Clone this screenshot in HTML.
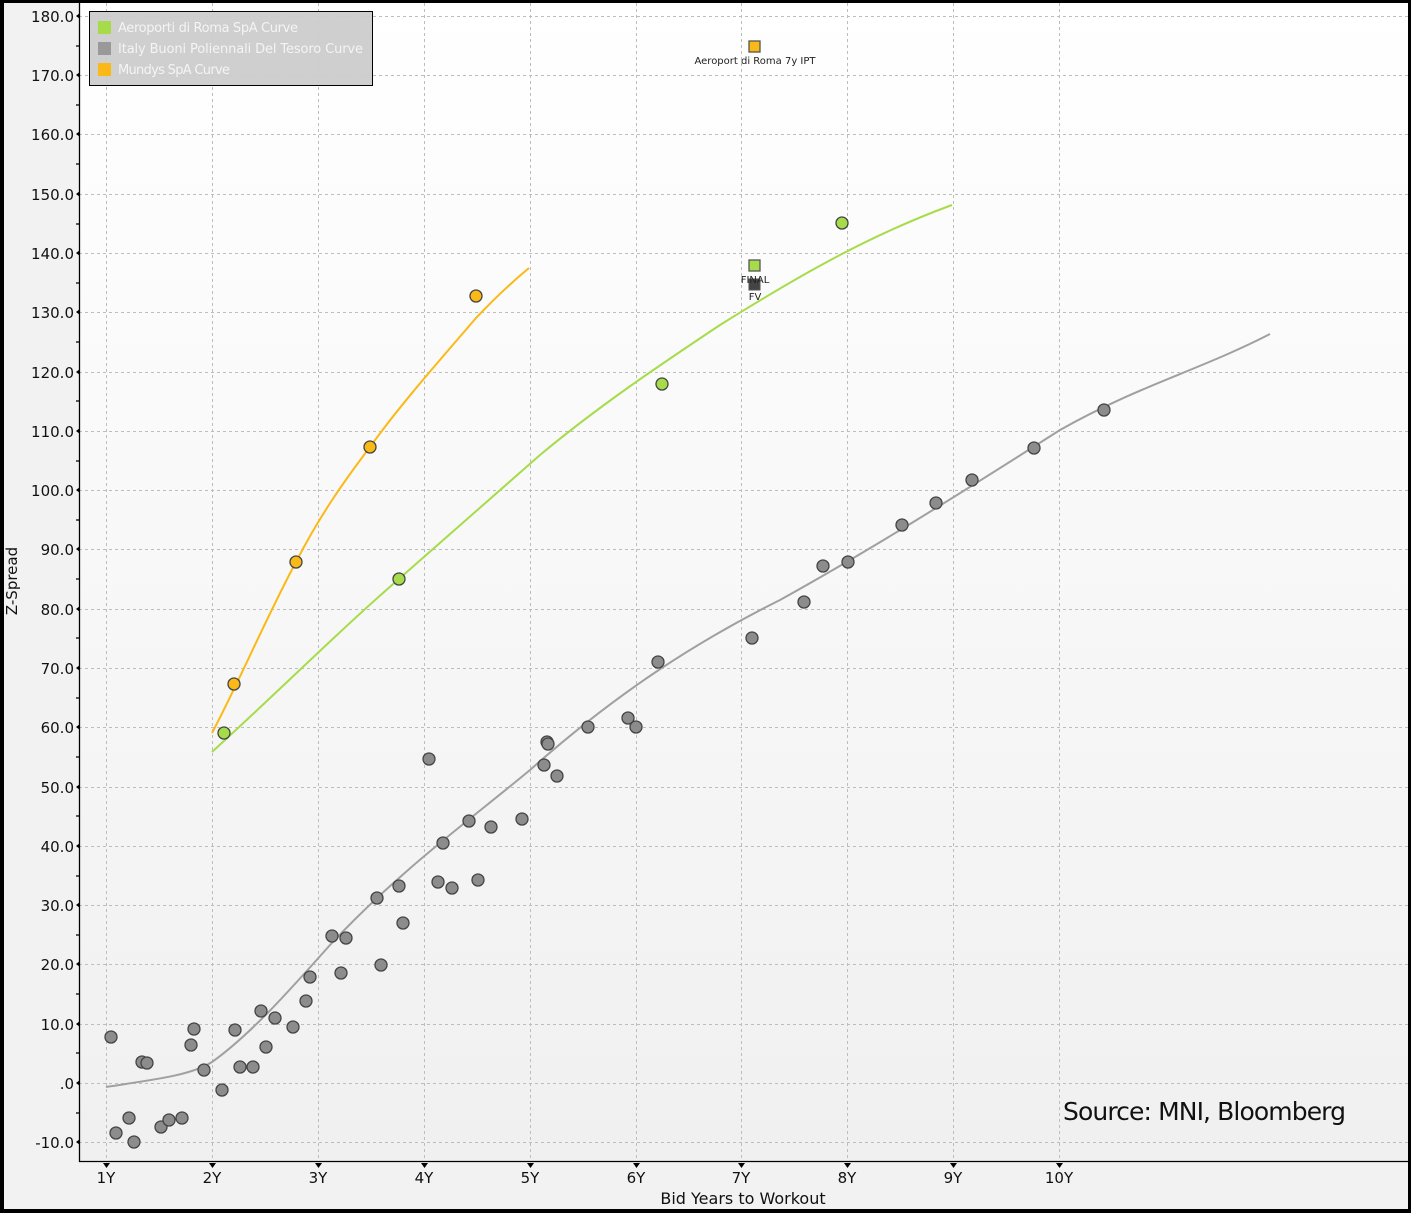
<!DOCTYPE html>
<html><head><meta charset="utf-8"><style>
html,body{margin:0;padding:0;background:#000}
svg{display:block}
text{font-family:"DejaVu Sans","Liberation Sans",sans-serif}
</style></head><body>
<svg width="1411" height="1213" viewBox="0 0 1411 1213" xmlns="http://www.w3.org/2000/svg">
<defs>
<linearGradient id="bg" x1="0" y1="0" x2="0" y2="1">
<stop offset="0" stop-color="#ffffff"/><stop offset="1" stop-color="#f0f0f0"/>
</linearGradient>
</defs>
<rect x="0" y="0" width="1411" height="1213" fill="#000"/>
<rect x="4" y="3" width="1404" height="1206" fill="#f2f2f2"/>
<rect x="79" y="3" width="1329" height="1158" fill="url(#bg)"/>
<g stroke="#bdbdbd" stroke-width="1" stroke-dasharray="3,3" fill="none">
<path d="M106.5 3V1161M212.5 3V1161M318.5 3V1161M424.5 3V1161M530.5 3V1161M636.5 3V1161M741.5 3V1161M847.5 3V1161M953.5 3V1161M1059.5 3V1161"/>
<path d="M79 16.5H1408M79 75.5H1408M79 134.5H1408M79 194.5H1408M79 253.5H1408M79 312.5H1408M79 372.5H1408M79 431.5H1408M79 490.5H1408M79 549.5H1408M79 609.5H1408M79 668.5H1408M79 727.5H1408M79 787.5H1408M79 846.5H1408M79 905.5H1408M79 964.5H1408M79 1024.5H1408M79 1083.5H1408M79 1142.5H1408"/>
</g>
<g stroke="#000" stroke-width="1.3">
<line x1="79.5" y1="3" x2="79.5" y2="1162"/>
<line x1="79" y1="1161.5" x2="1408" y2="1161.5"/>
<path d="M76 46H80M76 105H80M76 164H80M76 224H80M76 283H80M76 342H80M76 401H80M76 461H80M76 520H80M76 579H80M76 638H80M76 698H80M76 757H80M76 816H80M76 876H80M76 935H80M76 994H80M76 1053H80M76 1113H80"/>
</g>
<g fill="#000">
<path d="M76 16l4-3v6zM76 75l4-3v6zM76 134l4-3v6zM76 194l4-3v6zM76 253l4-3v6zM76 312l4-3v6zM76 372l4-3v6zM76 431l4-3v6zM76 490l4-3v6zM76 549l4-3v6zM76 609l4-3v6zM76 668l4-3v6zM76 727l4-3v6zM76 787l4-3v6zM76 846l4-3v6zM76 905l4-3v6zM76 964l4-3v6zM76 1024l4-3v6zM76 1083l4-3v6zM76 1142l4-3v6z"/>
<path d="M103 1163h7l-3.5 5zM209 1163h7l-3.5 5zM315 1163h7l-3.5 5zM421 1163h7l-3.5 5zM527 1163h7l-3.5 5zM633 1163h7l-3.5 5zM738 1163h7l-3.5 5zM844 1163h7l-3.5 5zM950 1163h7l-3.5 5zM1056 1163h7l-3.5 5z"/>
</g>
<g font-size="15" fill="#111" text-anchor="end">
<text x="74" y="22">180.0</text><text x="74" y="81">170.0</text><text x="74" y="140">160.0</text><text x="74" y="200">150.0</text><text x="74" y="259">140.0</text><text x="74" y="318">130.0</text><text x="74" y="378">120.0</text><text x="74" y="437">110.0</text><text x="74" y="496">100.0</text><text x="74" y="555">90.0</text><text x="74" y="615">80.0</text><text x="74" y="674">70.0</text><text x="74" y="733">60.0</text><text x="74" y="793">50.0</text><text x="74" y="852">40.0</text><text x="74" y="911">30.0</text><text x="74" y="970">20.0</text><text x="74" y="1030">10.0</text><text x="74" y="1089">.0</text><text x="74" y="1148">-10.0</text>
</g>
<g font-size="15" fill="#111" text-anchor="middle">
<text x="106" y="1183">1Y</text><text x="212" y="1183">2Y</text><text x="318" y="1183">3Y</text><text x="424" y="1183">4Y</text><text x="530" y="1183">5Y</text><text x="636" y="1183">6Y</text><text x="741" y="1183">7Y</text><text x="847" y="1183">8Y</text><text x="953" y="1183">9Y</text><text x="1059" y="1183">10Y</text>
<text x="743" y="1204" font-size="16">Bid Years to Workout</text>
<text transform="translate(17,581) rotate(-90)" font-size="15">Z-Spread</text>
</g>
<g fill="none" stroke-width="2">
<path stroke="#a0a0a0" d="M106 1087C150 1080 190 1076 212 1062C250 1035 290 990 330 945C400 870 470 820 530 770C620 690 700 640 780 600C870 550 950 500 1060 430C1140 385 1200 370 1270 334"/>
<path stroke="#a6dc4a" d="M212 752C280 690 340 630 400 578C460 525 500 490 540 455C600 405 660 365 720 325C800 275 870 235 952 205"/>
<path stroke="#fbb917" d="M212 733C240 680 265 620 296 562C320 515 345 480 370 447C400 405 440 360 476 318C495 298 512 282 529 268"/>
</g>
<g fill="#8c8c8c" stroke="#444" stroke-width="1.3">
<circle cx="111" cy="1037" r="6"/><circle cx="116" cy="1133" r="6"/><circle cx="129" cy="1118" r="6"/><circle cx="134" cy="1142" r="6"/><circle cx="142" cy="1062" r="6"/><circle cx="147" cy="1063" r="6"/><circle cx="161" cy="1127" r="6"/><circle cx="169" cy="1120" r="6"/><circle cx="182" cy="1118" r="6"/><circle cx="191" cy="1045" r="6"/><circle cx="194" cy="1029" r="6"/><circle cx="204" cy="1070" r="6"/><circle cx="222" cy="1090" r="6"/><circle cx="235" cy="1030" r="6"/><circle cx="240" cy="1067" r="6"/><circle cx="253" cy="1067" r="6"/><circle cx="261" cy="1011" r="6"/><circle cx="266" cy="1047" r="6"/><circle cx="275" cy="1018" r="6"/><circle cx="293" cy="1027" r="6"/><circle cx="306" cy="1001" r="6"/><circle cx="310" cy="977" r="6"/><circle cx="332" cy="936" r="6"/><circle cx="341" cy="973" r="6"/><circle cx="346" cy="938" r="6"/><circle cx="377" cy="898" r="6"/><circle cx="381" cy="965" r="6"/><circle cx="399" cy="886" r="6"/><circle cx="403" cy="923" r="6"/><circle cx="429" cy="759" r="6"/><circle cx="438" cy="882" r="6"/><circle cx="443" cy="843" r="6"/><circle cx="452" cy="888" r="6"/><circle cx="469" cy="821" r="6"/><circle cx="478" cy="880" r="6"/><circle cx="491" cy="827" r="6"/><circle cx="522" cy="819" r="6"/><circle cx="544" cy="765" r="6"/><circle cx="547" cy="742" r="6"/><circle cx="548" cy="744" r="6"/><circle cx="557" cy="776" r="6"/><circle cx="588" cy="727" r="6"/><circle cx="628" cy="718" r="6"/><circle cx="636" cy="727" r="6"/><circle cx="658" cy="662" r="6"/><circle cx="752" cy="638" r="6"/><circle cx="804" cy="602" r="6"/><circle cx="823" cy="566" r="6"/><circle cx="848" cy="562" r="6"/><circle cx="902" cy="525" r="6"/><circle cx="936" cy="503" r="6"/><circle cx="972" cy="480" r="6"/><circle cx="1034" cy="448" r="6"/><circle cx="1104" cy="410" r="6"/>
</g>
<g fill="#a6dc4a" stroke="#444" stroke-width="1.3">
<circle cx="224" cy="733" r="6"/><circle cx="399" cy="579" r="6"/><circle cx="662" cy="384" r="6"/><circle cx="842" cy="223" r="6"/>
</g>
<g fill="#fbb917" stroke="#444" stroke-width="1.3">
<circle cx="234" cy="684" r="6"/><circle cx="296" cy="562" r="6"/><circle cx="370" cy="447" r="6"/><circle cx="476" cy="296" r="6"/>
</g>
<rect x="749" y="41" width="11" height="11" fill="#fbb917" stroke="#555" stroke-width="1.3"/>
<text x="755" y="64" font-size="10" fill="#222" text-anchor="middle">Aeroport di Roma 7y IPT</text>
<rect x="749" y="260" width="11" height="11" fill="#a6dc4a" stroke="#555" stroke-width="1.3"/>
<rect x="749" y="279" width="11" height="11" fill="#444" stroke="#555" stroke-width="1"/>
<text x="755" y="283" font-size="10" fill="#222" text-anchor="middle">FINAL</text>
<text x="755" y="300" font-size="10" fill="#222" text-anchor="middle">FV</text>
<rect x="89.5" y="11.5" width="283" height="74" fill="#cccccc" fill-opacity="0.95" stroke="#000" stroke-width="1"/>
<rect x="98" y="21" width="13" height="13" fill="#a6dc4a"/>
<rect x="98" y="42" width="13" height="13" fill="#999"/>
<rect x="98" y="63" width="13" height="13" fill="#fbb917"/>
<g font-size="13" fill="#f4f4f4">
<text x="118" y="32" textLength="180">Aeroporti di Roma SpA Curve</text>
<text x="118" y="53" textLength="245">Italy Buoni Poliennali Del Tesoro Curve</text>
<text x="118" y="74" textLength="112">Mundys SpA Curve</text>
</g>
<text x="1063" y="1120" font-size="25" fill="#111" textLength="283">Source: MNI, Bloomberg</text>
</svg>
</body></html>
